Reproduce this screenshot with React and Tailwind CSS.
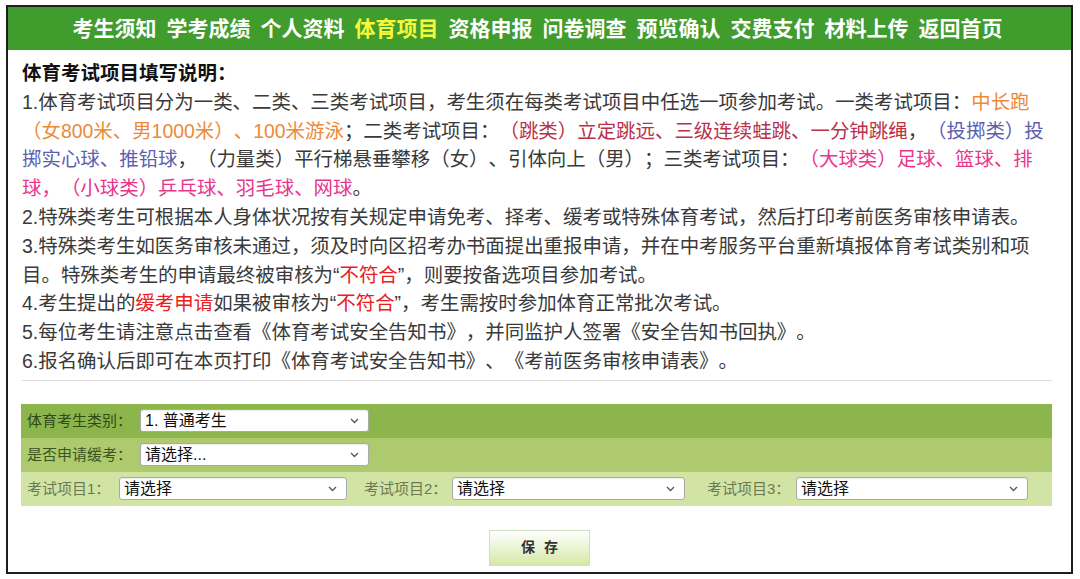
import React from "react";

const FONT = { fontFamily: '"Liberation Sans", "Noto Sans CJK SC", sans-serif' };

const navItems = ["考生须知", "学考成绩", "个人资料", "体育项目", "资格申报", "问卷调查", "预览确认", "交费支付", "材料上传", "返回首页"];

function Chevron() {
  return (
    <svg width="9" height="6" viewBox="0 0 9 6" className="shrink-0">
      <path d="M1 1 L4.5 4.5 L8 1" fill="none" stroke="#555" strokeWidth="1.3" />
    </svg>
  );
}

function FakeSelect({ value, className }) {
  return (
    <div className={"h-[23px] bg-white border border-[#a9a9a9] rounded-[3px] flex items-center justify-between pl-[4px] pr-[9px] shadow-[inset_0_1px_1px_rgba(0,0,0,0.08)] " + className}>
      <span className="text-[16px] text-[#111] leading-none">{value}</span>
      <Chevron />
    </div>
  );
}

export default function App() {
  const line = "h-[28.8px] leading-[28.8px] whitespace-nowrap";
  const orange = "text-[#ec8a3a]";
  const crimson = "text-[#b8324a]";
  const blue = "text-[#5c5eb0]";
  const pink = "text-[#e8358e]";
  const red = "text-[#e8201e]";
  return (
    <div className="w-[1080px] h-[579px] bg-white pt-[5px] [text-spacing-trim:space-all]" style={FONT}>
      <div className="ml-[6px] w-[1067px] h-[569px] border-2 border-[#1e1e1e] flex flex-col">
        <div className="h-[43px] bg-[#3f9c2d] flex items-center justify-center gap-[10px] pr-[4px]">
          {navItems.map((t) => (
            <span
              key={t}
              className={"text-[21px] font-bold leading-none " + (t === "体育项目" ? "text-[#f8f83a]" : "text-white")}
            >
              {t}
            </span>
          ))}
        </div>
        <div className="pl-[14px] pr-[19px] pt-[9px] text-[19.45px] text-[#3a3a3a]">
          <div className={line + " font-bold text-[19.5px] text-[#111]"}>体育考试项目填写说明：</div>
          <div className={line}>
            1.体育考试项目分为一类、二类、三类考试项目，考生须在每类考试项目中任选一项参加考试。一类考试项目：<span className={orange}>中长跑</span>
          </div>
          <div className={line}>
            <span className={orange}>（女800米、男1000米）、100米游泳</span>；二类考试项目：<span className={crimson}>（跳类）立定跳远、三级连续蛙跳、一分钟跳绳</span>，<span className={blue}>（投掷类）投</span>
          </div>
          <div className={line}>
            <span className={blue}>掷实心球、推铅球</span>，（力量类）平行梯悬垂攀移（女）、引体向上（男）；三类考试项目：<span className={pink}>（大球类）足球、篮球、排</span>
          </div>
          <div className={line}>
            <span className={pink}>球，（小球类）乒乓球、羽毛球、网球</span>。
          </div>
          <div className={line}>2.特殊类考生可根据本人身体状况按有关规定申请免考、择考、缓考或特殊体育考试，然后打印考前医务审核申请表。</div>
          <div className={line}>3.特殊类考生如医务审核未通过，须及时向区招考办书面提出重报申请，并在中考服务平台重新填报体育考试类别和项</div>
          <div className={line}>
            目。特殊类考生的申请最终被审核为“<span className={red}>不符合</span>”，则要按备选项目参加考试。
          </div>
          <div className={line}>
            4.考生提出的<span className={red}>缓考申请</span>如果被审核为“<span className={red}>不符合</span>”，考生需按时参加体育正常批次考试。
          </div>
          <div className={line}>5.每位考生请注意点击查看《体育考试安全告知书》，并同监护人签署《安全告知书回执》。</div>
          <div className={line}>6.报名确认后即可在本页打印《体育考试安全告知书》、《考前医务审核申请表》。</div>
          <div className="mt-[4px] border-t border-[#dcdcdc]" />
        </div>
        <div className="ml-[13px] mr-[19px] mt-[23px] text-[15px]">
          <div className="h-[34px] bg-[#8cb54c] flex items-center pl-[6px]">
            <span className="w-[113px] text-[#2f4a17]">体育考生类别：</span>
            <FakeSelect value="1. 普通考生" className="w-[229px]" />
          </div>
          <div className="h-[34px] bg-[#adca6f] flex items-center pl-[6px]">
            <span className="w-[113px] text-[#3a5520]">是否申请缓考：</span>
            <FakeSelect value="请选择..." className="w-[229px]" />
          </div>
          <div className="h-[34px] bg-[#d2e4a4] flex items-center pl-[6px]">
            <span className="w-[92px] text-[#6b7a55]">考试项目1：</span>
            <FakeSelect value="请选择" className="w-[228px]" />
            <span className="ml-[17px] w-[88px] text-[#6b7a55]">考试项目2：</span>
            <FakeSelect value="请选择" className="w-[233px]" />
            <span className="ml-[22px] w-[89px] text-[#6b7a55]">考试项目3：</span>
            <FakeSelect value="请选择" className="w-[232px]" />
          </div>
        </div>
        <div className="mt-[24px] flex justify-center">
          <div className="w-[101px] h-[36px] border border-[#d3dec3] bg-gradient-to-b from-white to-[#d6e8a6] flex items-center justify-center gap-[9px] text-[14px] font-bold text-[#333]">
            <span>保</span>
            <span>存</span>
          </div>
        </div>
      </div>
    </div>
  );
}
